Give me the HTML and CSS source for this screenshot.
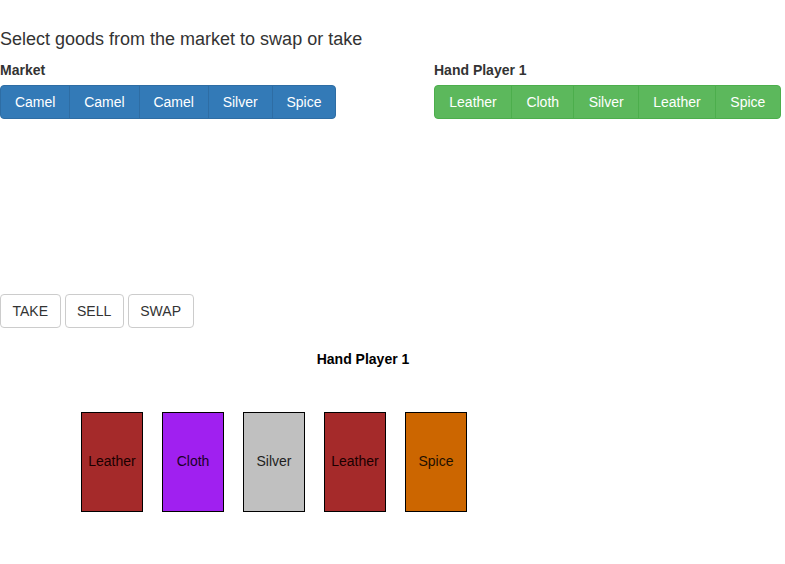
FILE: index.html
```html
<!DOCTYPE html>
<html>
<head>
<meta charset="utf-8">
<link rel="stylesheet" href="styles.css">
</head>
<body>
<h4 class="title">Select goods from the market to swap or take</h4>
<div class="row">
  <div class="col col-market">
    <label class="label">Market</label>
    <div class="btn-group">
      <button class="btn btn-primary">Camel</button><button class="btn btn-primary">Camel</button><button class="btn btn-primary">Camel</button><button class="btn btn-primary">Silver</button><button class="btn btn-primary">Spice</button>
    </div>
  </div>
  <div class="col col-hand">
    <label class="label">Hand Player 1</label>
    <div class="btn-group">
      <button class="btn btn-success">Leather</button><button class="btn btn-success">Cloth</button><button class="btn btn-success">Silver</button><button class="btn btn-success">Leather</button><button class="btn btn-success">Spice</button>
    </div>
  </div>
</div>
<div class="actions">
  <button class="btn btn-default">TAKE</button>
  <button class="btn btn-default">SELL</button>
  <button class="btn btn-default">SWAP</button>
</div>
<div class="board">
  <div class="board-title">Hand Player 1</div>
  <div class="cards">
    <div class="card leather">Leather</div>
    <div class="card cloth">Cloth</div>
    <div class="card silver">Silver</div>
    <div class="card leather">Leather</div>
    <div class="card spice">Spice</div>
  </div>
</div>
</body>
</html>
```
FILE: styles.css
```css
* { box-sizing: border-box; }
body {
  margin: 0;
  font-family: "Liberation Sans", Arial, Helvetica, sans-serif;
  font-size: 14px;
  line-height: 20px;
  color: #333;
  background: #fff;
}
.title {
  margin: 30px 0 10px;
  font-size: 18px;
  line-height: 19.8px;
  font-weight: 500;
}
.row {
  display: flex;
}
.col-market { width: 434px; }
.label {
  display: inline-block;
  margin-bottom: 5px;
  font-weight: bold;
}
.btn-group {
  display: flex;
}
.btn {
  font-family: inherit;
  font-size: 14px;
  line-height: 20px;
  padding: 6px 14px;
  border: 1px solid transparent;
  border-radius: 4px;
  cursor: pointer;
  margin: 0;
}
.btn-group .btn {
  border-radius: 0;
  margin-left: -1px;
}
.btn-group .btn:first-child {
  margin-left: 0;
  border-radius: 4px 0 0 4px;
}
.btn-group .btn:last-child {
  border-radius: 0 4px 4px 0;
}
.btn-primary {
  color: #fff;
  background: #337ab7;
  border-color: #2e6da4;
  padding: 6px 13.9px;
}
.btn-success {
  color: #fff;
  background: #5cb85c;
  border-color: #4cae4c;
  padding: 6px 14.3px;
}
.btn-default {
  color: #333;
  background: #fff;
  border-color: #ccc;
  padding: 6px 11.5px;
}
.actions {
  margin-top: 175px;
  display: flex;
  gap: 4px;
}
.board {
  width: 726px;
  margin-top: 21px;
}
.board-title {
  text-align: center;
  font-weight: bold;
  color: #000;
}
.cards {
  display: flex;
  gap: 19px;
  padding-left: 81px;
  margin-top: 43px;
}
.card {
  width: 62px;
  height: 100px;
  border: 1px solid #000;
  display: flex;
  align-items: center;
  justify-content: center;
  padding-bottom: 1px;
}
.leather { background: #a52a2a; color: #1a0000; }
.cloth { background: #a020f0; color: #1a0026; }
.silver { background: #c0c0c0; color: #1e1e1e; }
.spice { background: #cc6600; color: #1f1000; }
```
